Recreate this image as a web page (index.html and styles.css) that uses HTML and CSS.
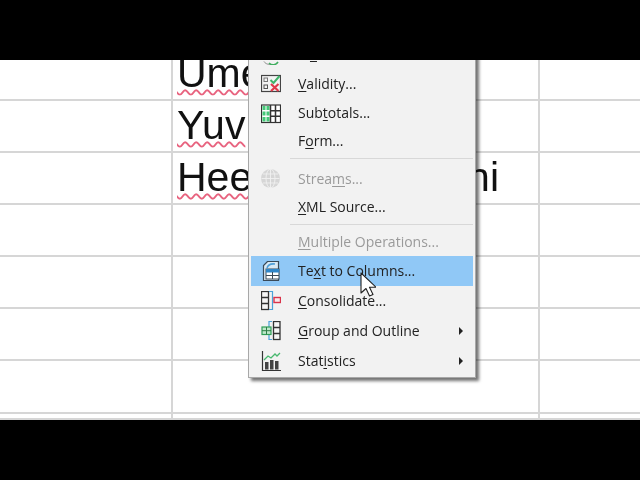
FILE: index.html
```html
<!DOCTYPE html>
<html lang="en">
<head>
<meta charset="utf-8">
<title>Data menu</title>
<link rel="stylesheet" href="styles.css">
</head>
<body>
<div class="screen">
  <div class="letterbox"></div>
  <main class="sheet">
    <div class="grid">
      <div class="cell"></div><div class="cell name"><span class="miss">Ume</span></div><div class="cell"></div>
      <div class="cell"></div><div class="cell name"><span class="miss">Yuv</span></div><div class="cell"></div>
      <div class="cell"></div><div class="cell name"><span class="miss">Hee</span><span>ni</span></div><div class="cell"></div>
      <div class="cell"></div><div class="cell"></div><div class="cell"></div>
      <div class="cell"></div><div class="cell"></div><div class="cell"></div>
      <div class="cell"></div><div class="cell"></div><div class="cell"></div>
      <div class="cell"></div><div class="cell"></div><div class="cell"></div>
      <div class="cell"></div><div class="cell"></div><div class="cell"></div>
    </div>
    <div class="menu">
      <div class="item h29"><svg class="icon" viewBox="0 0 20 20"><path d="M3 16.500c2 3 5 3 8 3" fill="none" stroke="#888"/><path d="M8 18c3 3 7 2 9-1" fill="none" stroke="#3fae5f" stroke-width="1.600"/></svg><span>Pi<u>v</u>ot Table</span></div>
      <div class="item"><svg class="icon" viewBox="0 0 20 20"><rect x="0.500" y="1.500" width="19" height="16" fill="#f4f4f4" stroke="#444" stroke-width="1.200"/><rect x="3" y="4" width="3.500" height="3.500" fill="none" stroke="#777"/><rect x="3" y="11" width="3.500" height="3.500" fill="none" stroke="#555"/><path d="M9.500 6l3 3 6-7" fill="none" stroke="#3fb56a" stroke-width="2"/><path d="M10 10l7.500 7M17.500 10l-7.500 7" fill="none" stroke="#e0394a" stroke-width="2.200"/></svg><span><u>V</u>alidity...</span></div>
      <div class="item h29"><svg class="icon" viewBox="0 0 20 20"><rect x="0.500" y="1" width="19" height="17.500" fill="#fff" stroke="#333" stroke-width="1.200"/><path d="M1.500 2h3v4h-3zM5.500 2h3v4h-3zM1.500 7.500h3v4h-3zM5.500 7.500h3v4h-3zM1.500 13h3v4.500h-3zM5.500 13h3v4.500h-3z" fill="#45c878"/><path d="M9.500 1v17.500M14.500 1v17.500M9.500 6.700h10M9.500 12.300h10" stroke="#333" stroke-width="1.500" fill="none"/></svg><span>Sub<u>t</u>otals...</span></div>
      <div class="item h27"><span class="icon"></span><span>F<u>o</u>rm...</span></div>
      <div class="sep wide"></div>
      <div class="item h28 off"><svg class="icon" viewBox="0 0 20 20"><circle cx="9.500" cy="9.500" r="9.500" fill="#d6d6d6"/><path d="M0.500 9.500h18M9.500 0v19M2 5h15M2 14h15" stroke="#f0f0f0" stroke-width="0.900" fill="none"/><ellipse cx="9.500" cy="9.500" rx="4.500" ry="9.500" fill="none" stroke="#f0f0f0" stroke-width="0.900"/></svg><span>Strea<u>m</u>s...</span></div>
      <div class="item h28"><span class="icon"></span><span><u>X</u>ML Source...</span></div>
      <div class="sep"></div>
      <div class="item h27 off"><span class="icon"></span><span><u>M</u>ultiple Operations...</span></div>
      <div class="item on"><svg class="icon" viewBox="0 0 20 20"><path d="M2.500 19.500v-15l4-4h11v19z" fill="#d9e9f5" stroke="#3a4a58" stroke-width="1.200"/><path d="M6 7c1-3.500 4-4.500 8-4" fill="none" stroke="#4f9fd8" stroke-width="1.600"/><rect x="5" y="8" width="13" height="10" fill="#fff" stroke="#3a4a58"/><rect x="5" y="8" width="13" height="3.500" fill="#2f86c8"/><path d="M5 14.500h13M11.500 11v7" stroke="#3a4a58" fill="none"/></svg><span>Te<u>x</u>t to Columns...</span></div>
      <div class="item"><svg class="icon" viewBox="0 0 20 20"><rect x="0.500" y="0.500" width="7" height="18" fill="#f6f6f6" stroke="#333" stroke-width="1.300"/><path d="M0.500 6.500h7M0.500 12.500h7" stroke="#333" stroke-width="1.300" fill="none"/><path d="M8 0.500h3.500v18H8" fill="none" stroke="#4ba3d9" stroke-width="1.200"/><rect x="13" y="6.500" width="6.500" height="5" fill="#fbe8ea" stroke="#d9344a" stroke-width="1.400"/></svg><span><u>C</u>onsolidate...</span></div>
      <div class="item"><svg class="icon" viewBox="0 0 20 20"><path d="M11 0.500H8v18h3" fill="none" stroke="#4ba3d9" stroke-width="1.200"/><rect x="12.500" y="0.500" width="6.500" height="18" fill="#f6f6f6" stroke="#333" stroke-width="1.300"/><path d="M12.500 6.500h6.500M12.500 12.500h6.500" stroke="#333" stroke-width="1.300" fill="none"/><rect x="1" y="6" width="9" height="7.500" fill="#bfe8cb" stroke="#2f9e57" stroke-width="1.200"/><path d="M5.500 6v7.500M1 9.700h9" stroke="#2f7e47" fill="none"/></svg><span><u>G</u>roup and Outline</span><i class="arrow"></i></div>
      <div class="item"><svg class="icon" viewBox="0 0 20 20"><path d="M1.500 0v19.500H20" fill="none" stroke="#333" stroke-width="1.200"/><rect x="4" y="11" width="3.500" height="7.500" fill="#444"/><rect x="9" y="9" width="3.500" height="9.500" fill="#444"/><rect x="14" y="10" width="3.500" height="8.500" fill="#444"/><path d="M3 9l4-4 3 2 4-4 2 2 3-3" fill="none" stroke="#48b86f" stroke-width="1.300"/></svg><span>Stat<u>i</u>stics</span><i class="arrow"></i></div>
    </div>
    <svg class="cursor" viewBox="0 0 16 25"><path d="M1 1v20l5-4.500 3.500 7.500 3.500-1.500-3.500-7.300h6.500z" fill="#fff" stroke="#222" stroke-width="1.100" stroke-linejoin="round"/></svg>
  </main>
  <div class="letterbox"></div>
</div>
</body>
</html>
```

FILE: styles.css
```css
html, body {
  margin: 0;
  padding: 0;
  background: #000;
}

.screen {
  width: 640px;
  height: 480px;
  display: flex;
  flex-direction: column;
  overflow: hidden;
}

.letterbox {
  height: 60px;
  flex: none;
  background: #000;
}

.sheet {
  position: relative;
  height: 360px;
  flex: none;
  overflow: hidden;
  background: #fff;
  filter: blur(0.35px);
}

.grid {
  display: grid;
  grid-template-columns: 173px 367px 100px;
  grid-template-rows: 40.5px repeat(6, 52.2px) 6.3px;
  height: 360px;
}

.cell {
  box-sizing: border-box;
  border-right: 2px solid #d6d6d6;
  border-bottom: 2px solid #d6d6d6;
  min-width: 0;
}

.cell:nth-child(3n) {
  border-right: 0;
}

.name {
  display: flex;
  justify-content: space-between;
  align-items: flex-end;
  padding: 0 39px 3px 4px;
  font: 41px/46px "Liberation Sans", Arial, sans-serif;
  color: #111;
}

.miss {
  text-decoration: underline wavy #e8637f 1.5px;
  text-underline-offset: 2px;
  text-decoration-skip-ink: none;
}

.menu {
  position: absolute;
  left: 248px;
  top: -21px;
  box-sizing: border-box;
  width: 228px;
  padding: 0 2px 1px;
  background: #f2f2f2;
  border: 1px solid #a8a8a8;
  box-shadow: 3px 3px 3px rgba(0, 0, 0, 0.55);
  font: 14px "Open Sans", "Noto Sans", sans-serif;
  color: #222;
}

.item {
  display: flex;
  align-items: center;
  height: 30px;
  padding: 0 10px;
  gap: 17px;
}

.item > span:not(.icon) {
  padding-bottom: 2px;
}

.item u {
  text-underline-offset: 2px;
}

.h29 { height: 29px; }
.h28 { height: 28px; }
.h27 { height: 27px; }

.off {
  color: #9a9a9a;
}

.on {
  background: #90c8f6;
}

.icon {
  display: block;
  width: 20px;
  height: 20px;
  flex: none;
  overflow: hidden;
}

.arrow {
  width: 0;
  height: 0;
  margin-left: auto;
  border-left: 4px solid #222;
  border-top: 4px solid transparent;
  border-bottom: 4px solid transparent;
}

.sep {
  height: 8px;
  margin-left: 39px;
  box-sizing: border-box;
  padding-top: 3px;
}

.sep.wide {
  height: 10px;
}

.sep::before {
  content: "";
  display: block;
  height: 1px;
  background: #d8d8d8;
}

.cursor {
  position: absolute;
  left: 360px;
  top: 212px;
  width: 16px;
  height: 25px;
}
```
